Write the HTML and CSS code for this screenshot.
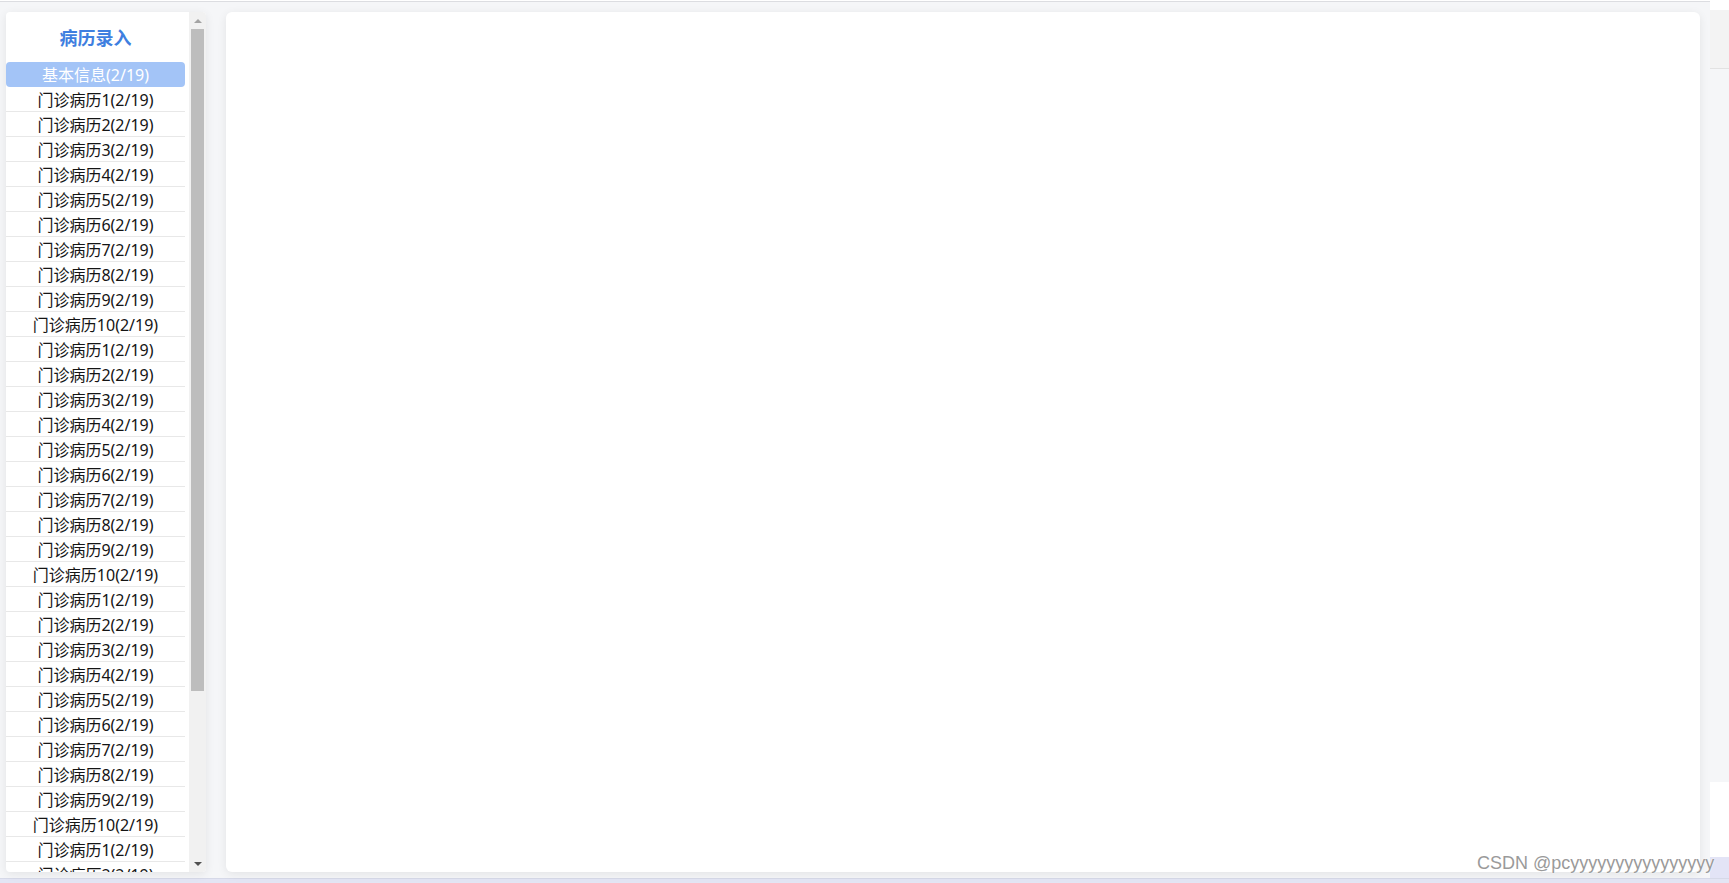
FILE: index.html
```html
<!DOCTYPE html>
<html lang="zh">
<head>
<meta charset="utf-8">
<title>病历录入</title>
<link rel="stylesheet" href="styles.css">
</head>
<body>
<div class="page">
  <div class="main">
    <div class="cards">
      <aside class="side-card">
        <div class="side-content">
          <div class="side-title">病历录入</div>
          <ul class="menu">
            <li class="menu-item active">基本信息(2/19)</li>
            <li class="menu-item">门诊病历1(2/19)</li>
            <li class="menu-item">门诊病历2(2/19)</li>
            <li class="menu-item">门诊病历3(2/19)</li>
            <li class="menu-item">门诊病历4(2/19)</li>
            <li class="menu-item">门诊病历5(2/19)</li>
            <li class="menu-item">门诊病历6(2/19)</li>
            <li class="menu-item">门诊病历7(2/19)</li>
            <li class="menu-item">门诊病历8(2/19)</li>
            <li class="menu-item">门诊病历9(2/19)</li>
            <li class="menu-item">门诊病历10(2/19)</li>
            <li class="menu-item">门诊病历1(2/19)</li>
            <li class="menu-item">门诊病历2(2/19)</li>
            <li class="menu-item">门诊病历3(2/19)</li>
            <li class="menu-item">门诊病历4(2/19)</li>
            <li class="menu-item">门诊病历5(2/19)</li>
            <li class="menu-item">门诊病历6(2/19)</li>
            <li class="menu-item">门诊病历7(2/19)</li>
            <li class="menu-item">门诊病历8(2/19)</li>
            <li class="menu-item">门诊病历9(2/19)</li>
            <li class="menu-item">门诊病历10(2/19)</li>
            <li class="menu-item">门诊病历1(2/19)</li>
            <li class="menu-item">门诊病历2(2/19)</li>
            <li class="menu-item">门诊病历3(2/19)</li>
            <li class="menu-item">门诊病历4(2/19)</li>
            <li class="menu-item">门诊病历5(2/19)</li>
            <li class="menu-item">门诊病历6(2/19)</li>
            <li class="menu-item">门诊病历7(2/19)</li>
            <li class="menu-item">门诊病历8(2/19)</li>
            <li class="menu-item">门诊病历9(2/19)</li>
            <li class="menu-item">门诊病历10(2/19)</li>
            <li class="menu-item">门诊病历1(2/19)</li>
            <li class="menu-item">门诊病历2(2/19)</li>
            <li class="menu-item">门诊病历3(2/19)</li>
          </ul>
        </div>
        <div class="scrollbar">
          <div class="sb-btn"><span class="arrow-up"></span></div>
          <div class="sb-track"><div class="sb-thumb"></div></div>
          <div class="sb-btn"><span class="arrow-down"></span></div>
        </div>
      </aside>
      <section class="content-card"></section>
    </div>
  </div>
  <div class="right-strip">
    <div class="rs-top"></div>
    <div class="rs-head"></div>
    <div class="rs-mid"></div>
    <div class="rs-white"></div>
    <div class="rs-bottom"></div>
  </div>
  <div class="watermark">CSDN @pcyyyyyyyyyyyyyyyy</div>
</div>
<div class="bottom-strip"></div>
</body>
</html>
```

FILE: styles.css
```css
* { box-sizing: border-box; }
html, body {
  margin: 0;
  padding: 0;
  background: #ffffff;
  font-family: "Noto Sans", "Noto Sans CJK SC", sans-serif;
  overflow: hidden;
}
.page {
  position: relative;
  display: flex;
  height: 878px;
}
.main {
  width: 1710px;
  margin-top: 1px;
  border-top: 1px solid #dcdde1;
  background: #f5f6f8;
  padding: 10px 10px 0 6px;
}
.cards {
  display: flex;
  gap: 20px;
  height: 860px;
}
.side-card {
  width: 200px;
  height: 860px;
  background: #ffffff;
  border-radius: 4px;
  box-shadow: 0 2px 10px rgba(0, 0, 0, 0.08);
  display: flex;
  overflow: hidden;
}
.side-content {
  width: 183px;
  padding-right: 4px;
  overflow: hidden;
}
.side-title {
  padding: 14px 0 12px;
  line-height: 24px;
  text-align: center;
  font-size: 18px;
  font-weight: 700;
  color: #3f7fe0;
}
.menu {
  list-style: none;
  margin: 0;
  padding: 0;
}
.menu-item {
  height: 25px;
  line-height: 26px;
  border-bottom: 1px solid #e8e8e8;
  text-align: center;
  font-size: 16px;
  color: #141414;
  white-space: nowrap;
}
.menu-item.active {
  background: #a3c4f7;
  color: #ffffff;
  border-bottom-color: transparent;
  border-radius: 4px;
}
.scrollbar {
  width: 17px;
  background: #f1f1f1;
  display: flex;
  flex-direction: column;
}
.sb-btn {
  height: 17px;
  display: flex;
  align-items: center;
  justify-content: center;
}
.arrow-up {
  width: 0;
  height: 0;
  border-left: 4px solid transparent;
  border-right: 4px solid transparent;
  border-bottom: 4px solid #a3a3a3;
}
.arrow-down {
  width: 0;
  height: 0;
  border-left: 4px solid transparent;
  border-right: 4px solid transparent;
  border-top: 4px solid #505050;
}
.sb-track {
  flex: 1;
  padding: 0 2px;
}
.sb-thumb {
  height: 662px;
  background: #bdbdbd;
}
.content-card {
  flex: 1;
  height: 860px;
  background: #ffffff;
  border-radius: 6px;
  box-shadow: 0 2px 10px rgba(0, 0, 0, 0.08);
}
.right-strip {
  flex: 1;
  display: flex;
  flex-direction: column;
}
.rs-top { height: 10px; background: #ffffff; }
.rs-head { height: 59px; background: #f3f3f3; border-bottom: 1px solid #e2e2e2; }
.rs-mid { height: 713px; background: #f5f6f8; }
.rs-white { height: 75px; background: #ffffff; }
.rs-bottom { flex: 1; background: #e3e4f6; }
.watermark {
  position: absolute;
  left: 1477px;
  top: 853px;
  font-family: "Liberation Sans", Arial, sans-serif;
  font-size: 18px;
  line-height: 20px;
  color: #9a9a9a;
  text-shadow: 0 0 1px #ffffff, 0 0 2px #ffffff;
  white-space: nowrap;
}
.bottom-strip {
  height: 5px;
  background: #e3e5f4;
  border-top: 1px solid #d6d9e8;
}
```
